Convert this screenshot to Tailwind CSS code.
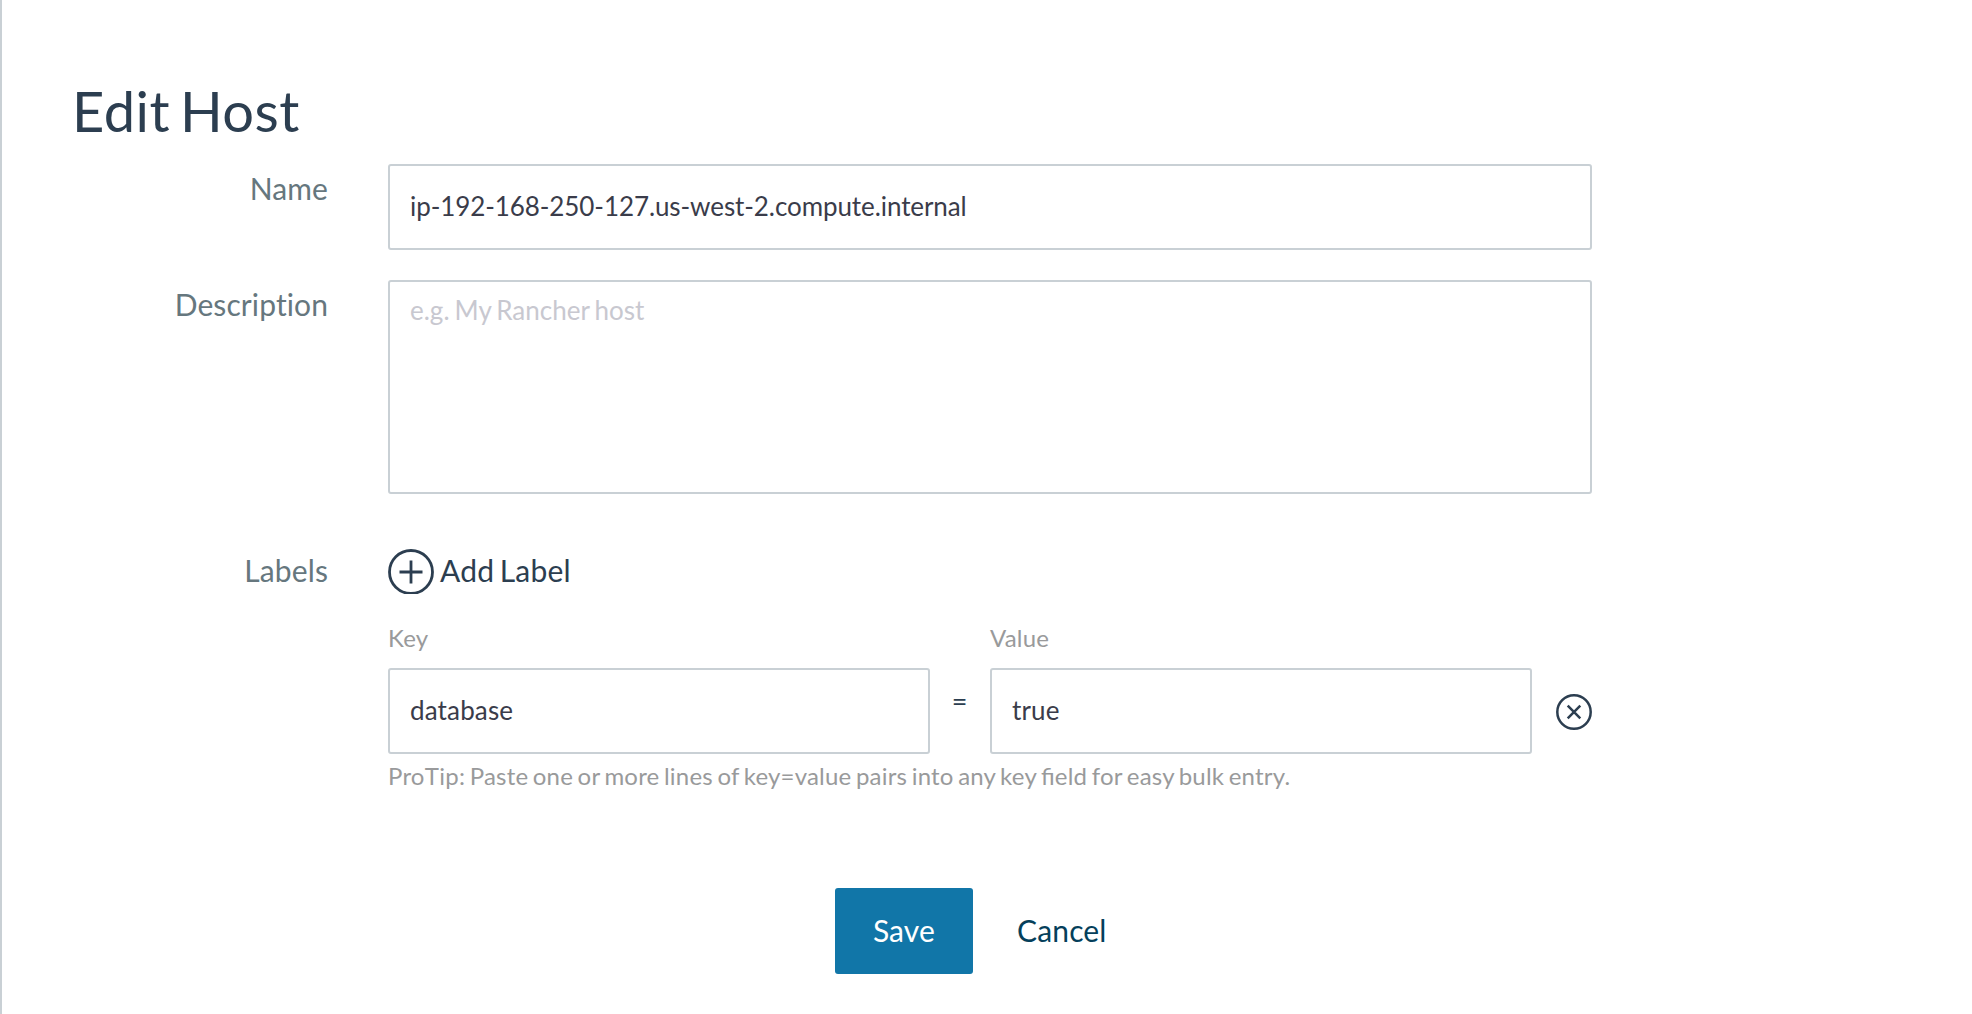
<!DOCTYPE html>
<html lang="en"><head><meta charset="utf-8"><title>Edit Host</title>
<script src="https://cdn.jsdelivr.net/npm/@tailwindcss/browser@4"></script></head>
<body class="bg-white font-['Lato',sans-serif] text-[#2c3e50]">
<main class="h-[1014px] w-full overflow-hidden border-l-2 border-[#c9d0d5] pl-[71px] pt-[75px]">
<h1 class="-ml-px h-[89px] text-[56px] leading-[72px] tracking-[0.5px] [word-spacing:-5px]">Edit Host</h1>
<form class="grid w-[1519px] grid-cols-[255px_1204px] gap-x-[60px]">
<label class="pt-[6px] text-right text-[30px] leading-[36px] tracking-[0.1px] text-[#66777e]">Name</label>
<input class="h-[86px] rounded-[3px] border-2 border-[#c9d0d5] px-5 pb-[2px] text-[26px] tracking-[-0.085px] text-[#3a3c4a]" value="ip-192-168-250-127.us-west-2.compute.internal">
<label class="mt-[30px] pt-[6px] text-right text-[30px] leading-[36px] tracking-[0.1px] text-[#66777e]">Description</label>
<textarea class="mt-[30px] h-[214px] resize-none rounded-[3px] border-2 border-[#c9d0d5] px-5 py-[10px] text-[26px] leading-[36px] [word-spacing:-1.600px] placeholder:text-[#c8c8d0]" placeholder="e.g. My Rancher host"></textarea>
<label class="mt-[54px] pt-[4px] text-right text-[30px] leading-[36px] tracking-[0.1px] text-[#66777e]">Labels</label>
<div class="mt-[54px]">
<button type="button" class="flex h-[48px] items-start pt-px text-[30px] leading-[43px] tracking-[0.2px] [word-spacing:-2.400px]">
<svg class="mr-[6px] h-[45px] w-[46px]" viewBox="0 0 46 45" fill="none" stroke="currentColor" stroke-width="2.800"><circle cx="23" cy="23" r="21.500"/><path d="M23 11.500v23M11.500 23h23"/></svg>Add Label</button>
<div class="mt-[26px] grid grid-cols-[542px_60px_542px_60px] text-[24px] leading-[32px] tracking-[0.2px] text-[#999a9b]"><span>Key</span><span></span><span>Value</span></div>
<div class="mt-[14px] grid grid-cols-[542px_60px_542px_60px] items-center">
<input class="h-[86px] rounded-[3px] border-2 border-[#c9d0d5] px-5 pb-[2px] text-[26px] tracking-[0.15px] text-[#3a3c4a]" value="database">
<span class="pb-5 pr-px text-center text-[27px]">=</span>
<input class="h-[86px] rounded-[3px] border-2 border-[#c9d0d5] px-5 pb-[2px] text-[26px] tracking-[0.15px] text-[#3a3c4a]" value="true">
<svg class="mt-[2px] size-[36px] justify-self-end" viewBox="0 0 36 36" fill="none" stroke="currentColor" stroke-width="2.500"><circle cx="18" cy="18" r="16.700"/><path d="m11.700 11.700 12.600 12.600M24.300 11.700 11.700 24.300"/></svg>
</div>
<p class="mt-[6px] text-[24px] leading-[32px] tracking-[0.2px] text-[#999a9b] [font-feature-settings:'liga'] [word-spacing:-1.800px]">Pro<span class="tracking-[0.500px]">T</span>ip: Paste one or more lines of key=value pairs into any key field for easy bulk entry.</p>
</div></form>
<div class="mt-[96px] flex pl-[762px] text-[30px] tracking-[0.15px]"><button class="h-[86px] w-[138px] rounded-[3px] bg-[#1176a8] pb-[2px] text-white">Save</button><button class="ml-[44px] pb-[2px] text-[#053f5b]">Cancel</button></div>
</main></body></html>
